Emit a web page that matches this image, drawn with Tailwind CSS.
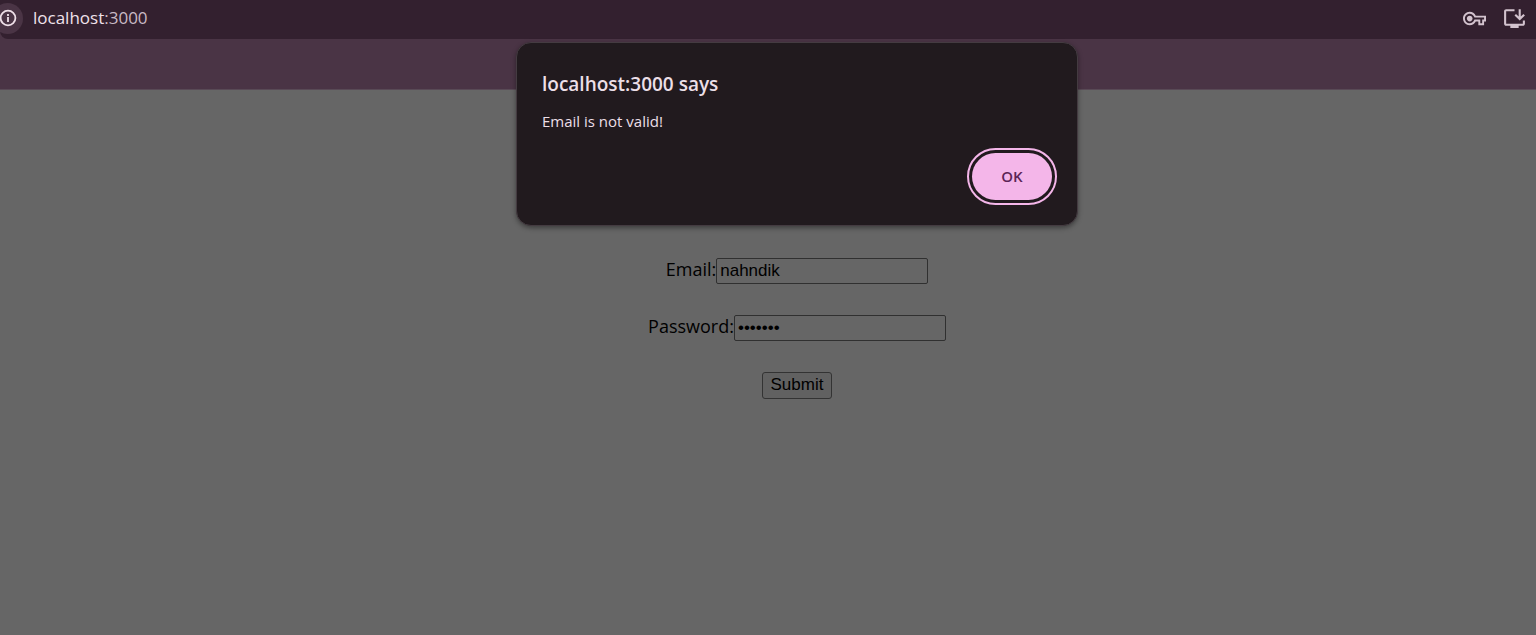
<!DOCTYPE html>
<html lang="en">
<head>
<meta charset="utf-8">
<title>localhost:3000</title>
<script src="https://cdn.jsdelivr.net/npm/@tailwindcss/browser@4"></script>
</head>
<body class="flex min-h-screen flex-col overflow-x-hidden bg-[#666666] font-['Open_Sans','Noto_Sans',sans-serif] text-black">
  <header class="bg-[#4a3445]">
    <div class="flex h-[39px] items-center justify-between rounded-bl-lg bg-[#33202f] pr-[9px] pb-[3px]">
      <div class="flex items-center gap-[10px]">
        <button type="button" aria-label="View site information" class="-ml-2 flex size-[31px] items-center justify-center rounded-full bg-[#4a3445] text-[#eedfe8]">
          <svg class="size-[18px]" viewBox="0 0 18 18" fill="none" stroke="currentColor" stroke-width="1.8"><circle cx="9" cy="9" r="7.4"/><path d="M9 8v5M9 5v1.9"/></svg>
        </button>
        <div class="text-[17px] leading-6 text-[#f0e2eb]">localhost<span class="text-[#c9bac5]">:3000</span></div>
      </div>
      <div class="flex items-center gap-[16px] text-[#d3c3ce]">
        <button type="button" aria-label="Manage passwords">
          <svg class="size-[23px]" viewBox="0 0 24 24" fill="currentColor"><path d="M22 19h-6v-4h-2.68c-1.14 2.42-3.6 4-6.32 4-3.86 0-7-3.14-7-7s3.14-7 7-7c2.72 0 5.17 1.58 6.32 4H24v6h-2v4zm-4-2h2v-4h2v-2H11.94l-.23-.67C11.01 8.34 9.11 7 7 7c-2.76 0-5 2.24-5 5s2.24 5 5 5c2.11 0 4.01-1.34 4.71-3.33l.23-.67H18v4zM7 15c-1.65 0-3-1.35-3-3s1.35-3 3-3 3 1.35 3 3-1.35 3-3 3z"/></svg>
        </button>
        <button type="button" aria-label="Install app">
          <svg class="size-[25px]" viewBox="0 0 24 24" fill="currentColor"><path d="M20 17H4V5h8V3H4c-1.11 0-2 .89-2 2v12c0 1.1.89 2 2 2h4v2h8v-2h4c1.1 0 2-.9 2-2v-3h-2v3z"/><path d="M17 14l5-5-1.41-1.41L18 10.17V3h-2v7.17l-2.59-2.58L12 9l5 5z"/></svg>
        </button>
      </div>
    </div>
    <div class="h-[51px] border-b border-[#594a56]"></div>
  </header>

  <main class="relative flex flex-1 flex-col pl-[58px]">
    <form class="flex flex-col items-center pt-[168px] text-[18px]">
      <div class="mb-[31px] flex h-[26px] items-center">
        <label for="email" class="pb-[3px]">Email:</label>
        <input id="email" type="text" value="nahndik" class="h-[26px] w-[212px] rounded-[2px] border border-[#303030] bg-transparent px-[3px] pb-[1px] font-['Liberation_Sans',sans-serif] text-[17px] outline-none">
      </div>
      <div class="mb-[31px] flex h-[26px] items-center">
        <label for="password" class="pb-[3px]">Password:</label>
        <input id="password" type="password" value="nahndik" class="h-[26px] w-[212px] rounded-[2px] border border-[#303030] bg-transparent px-[3px] pb-[1px] font-['Liberation_Sans',sans-serif] text-[17px] outline-none">
      </div>
      <button type="submit" class="h-[27px] rounded-[3px] border border-[#333333] bg-[#616161] px-2 pb-[2px] font-['Liberation_Sans',sans-serif] text-[17px] leading-6">Submit</button>
    </form>

    <div class="absolute inset-x-0 -top-[48px] flex justify-center pl-[58px]">
      <section role="alertdialog" aria-labelledby="alert-title" aria-describedby="alert-text" class="flex h-[184px] w-[562px] flex-col rounded-[15px] border border-[#443b41] bg-[#211a1e] px-[25px] pt-[27px] text-[#ecdfe7] shadow-[0_2px_5px_rgba(0,0,0,0.4)]">
        <h1 id="alert-title" class="text-[19px] leading-[28px] font-semibold">localhost:3000 says</h1>
        <p id="alert-text" class="mt-[12px] text-[15px] leading-[22px]">Email is not valid!</p>
        <button type="button" class="mt-[21px] h-[47px] w-[80px] self-end rounded-full bg-[#f4b6e9] text-[15px] font-semibold text-[#5b2456] outline-2 outline-offset-3 outline-[#f4b6e9]">OK</button>
      </section>
    </div>
  </main>
</body>
</html>
